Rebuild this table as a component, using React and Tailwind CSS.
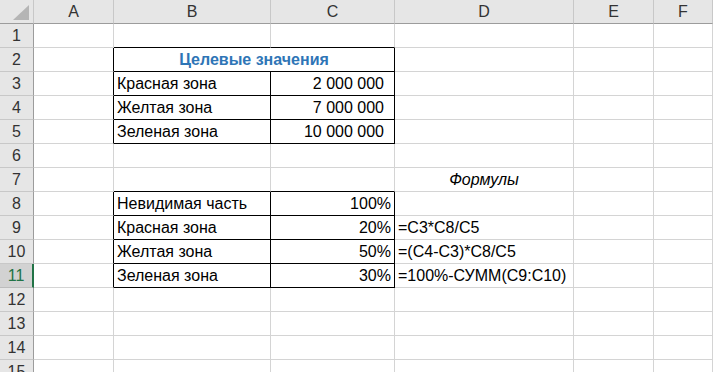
const COLS = ["A", "B", "C", "D", "E", "F"]

// cells keyed by "COLROW"
const CELLS = {
  B2: { text: "Целевые значения", span: 2, align: "center", cls: "font-bold text-[#2e75b6]" },
  B3: { text: "Красная зона" },
  C3: { text: "2 000 000", align: "right", cls: "pr-[10px]" },
  B4: { text: "Желтая зона" },
  C4: { text: "7 000 000", align: "right", cls: "pr-[10px]" },
  B5: { text: "Зеленая зона" },
  C5: { text: "10 000 000", align: "right", cls: "pr-[10px]" },
  D7: { text: "Формулы", align: "center", cls: "italic" },
  B8: { text: "Невидимая часть" },
  C8: { text: "100%", align: "right", cls: "pr-[3px]" },
  B9: { text: "Красная зона" },
  C9: { text: "20%", align: "right", cls: "pr-[3px]" },
  D9: { text: "=C3*C8/C5" },
  B10: { text: "Желтая зона" },
  C10: { text: "50%", align: "right", cls: "pr-[3px]" },
  D10: { text: "=(C4-C3)*C8/C5" },
  B11: { text: "Зеленая зона" },
  C11: { text: "30%", align: "right", cls: "pr-[3px]" },
  D11: { text: "=100%-СУММ(C9:C10)" },
}

// boxed ranges (black borders)
const inBox = (col, row) =>
  (col === "B" || col === "C") && ((row >= 2 && row <= 5) || (row >= 8 && row <= 11))

function cellBorders(col, row) {
  const ci = COLS.indexOf(col)
  const right = inBox(col, row) || (ci < 5 && inBox(COLS[ci + 1], row))
  const bottom = inBox(col, row) || inBox(col, row + 1)
  return `${right ? "border-r-black" : "border-r-[#d4d4d4]"} ${bottom ? "border-b-black" : "border-b-[#d4d4d4]"}`
}

function Cell({ col, row }) {
  const c = CELLS[col + row]
  const align =
    c?.align === "right" ? "justify-end" : c?.align === "center" ? "justify-center" : "justify-start pl-[3px]"
  return (
    <div
      className={`h-[24px] border-r border-b flex items-end pb-[2px] whitespace-nowrap overflow-visible ${align} ${cellBorders(
        c?.span ? "C" : col,
        row
      )} ${c?.cls || ""}`}
      style={c?.span ? { gridColumn: "span 2" } : undefined}
    >
      {c?.text}
    </div>
  )
}

export default function App() {
  const rows = Array.from({ length: 15 }, (_, i) => i + 1)
  return (
    <div
      className="w-[713px] h-[372px] overflow-hidden bg-white text-[16px] text-black leading-[19px]"
      style={{ fontFamily: '"Liberation Sans", Arial, sans-serif' }}
    >
      <div className="grid grid-cols-[34px_80px_157px_124px_179px_80px_1fr]">
        {/* column headers */}
        <div className="h-[24px] bg-[#e6e6e6] border-r border-b border-r-[#c8c8c8] border-b-[#9c9c9c] relative">
          <svg className="absolute left-[12px] top-[5px]" width="18" height="16" viewBox="0 0 18 16">
            <polygon points="17,0 17,15 1,15" fill="#b5b5b5" />
          </svg>
        </div>
        {COLS.map((c) => (
          <div
            key={c}
            className="h-[24px] bg-[#e6e6e6] border-r border-b border-r-[#c8c8c8] border-b-[#9c9c9c] flex items-center justify-center text-[#333]"
          >
            {c}
          </div>
        ))}

        {rows.map((r) => (
          <Row key={r} r={r} />
        ))}
      </div>
    </div>
  )
}

function Row({ r }) {
  const active = r === 11
  return (
    <>
      <div
        className={`h-[24px] border-b flex items-center justify-center ${
          active
            ? "bg-[#d2d2d2] text-[#217346] border-r-2 border-r-[#217346] border-b-[#bcbcbc]"
            : "bg-[#e6e6e6] text-[#333] border-r border-r-[#9c9c9c] border-b-[#c8c8c8]"
        }`}
      >
        {r}
      </div>
      {COLS.map((c) => {
        if (r === 2 && c === "C") return null
        return <Cell key={c} col={c} row={r} />
      })}
    </>
  )
}
